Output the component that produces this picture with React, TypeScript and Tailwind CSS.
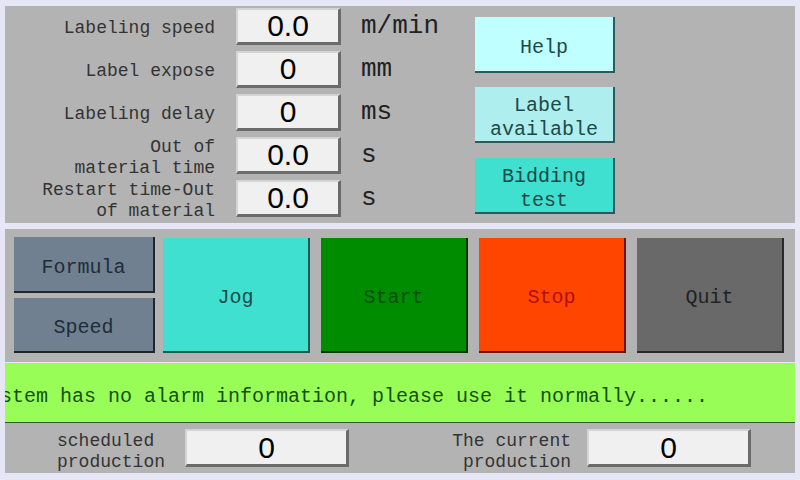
import React from "react";

const mono = "font-[family-name:Liberation_Mono,Courier_New,monospace]";
const sans = "font-[family-name:Liberation_Sans,Arial,sans-serif]";

type Param = { label: string[]; value: string; unit: string };

const params: Param[] = [
  { label: ["Labeling speed"], value: "0.0", unit: "m/min" },
  { label: ["Label expose"], value: "0", unit: "mm" },
  { label: ["Labeling delay"], value: "0", unit: "ms" },
  { label: ["Out of", "material time"], value: "0.0", unit: "s" },
  { label: ["Restart time-Out", "of material"], value: "0.0", unit: "s" },
];

// Sunken-looking numeric field used across the HMI screen
function ValueBox({ value, className }: { value: string; className: string }) {
  return (
    <div
      className={`${className} flex items-center justify-center bg-[#f0f0f0] border-t-2 border-l-2 border-t-[#d4d4d4] border-l-[#d4d4d4] border-b-[3px] border-r-[3px] border-b-[#6b6b6b] border-r-[#6b6b6b] ${sans} text-[30px] leading-none text-black`}
    >
      {value}
    </div>
  );
}

function SideButton({ lines, bg }: { lines: string[]; bg: string }) {
  return (
    <button
      className={`w-[140px] h-[56px] pt-[8px] ${bg} border-r-2 border-b-2 border-r-[#2f5a5a] border-b-[#2f5a5a] flex flex-col items-center justify-center ${mono} text-[20px] leading-[24px] text-[#1c4a4a]`}
    >
      {lines.map((l) => (
        <span key={l}>{l}</span>
      ))}
    </button>
  );
}

function BigButton({ label, className }: { label: string; className: string }) {
  return (
    <button
      className={`w-[147px] h-[115px] pt-[7px] flex items-center justify-center border-r-2 border-b-2 border-black/60 ${mono} text-[20px] ${className}`}
    >
      {label}
    </button>
  );
}

export default function App() {
  return (
    <div className="w-[800px] h-[480px] bg-[#e6e6f6] pt-[6px] px-[5px] overflow-hidden">
      {/* parameter panel */}
      <div className="h-[217px] bg-[#b3b3b3] flex">
        <div className="flex flex-col gap-[6px] pt-[2px]">
          {params.map((p) => (
            <div key={p.label.join(" ")} className="flex items-center h-[37px]">
              <div
                className={`w-[210px] pt-[4px] text-right ${mono} text-[18px] leading-[21px] text-[#333]`}
              >
                {p.label.map((l) => (
                  <div key={l} className="whitespace-pre">
                    {l}
                  </div>
                ))}
              </div>
              <ValueBox value={p.value} className="ml-[21px] w-[105px] h-[37px]" />
              <div className={`ml-[20px] w-[114px] pb-[2px] ${mono} text-[26px] leading-none text-[#222]`}>
                {p.unit}
              </div>
            </div>
          ))}
        </div>
        <div className="flex flex-col pt-[11px] gap-[14px]">
          <SideButton lines={["Help"]} bg="bg-[#c0ffff]" />
          <SideButton lines={["Label", "available"]} bg="bg-[#afeeee]" />
          <div className="pt-[1px]">
            <SideButton lines={["Bidding", "test"]} bg="bg-[#40e0d0]" />
          </div>
        </div>
      </div>

      {/* control panel */}
      <div className="mt-[6px] h-[133px] bg-[#b3b3b3] flex items-start pt-[8px] pl-[9px]">
        <div className="flex flex-col gap-[5px]">
          <button
            className={`w-[141px] h-[56px] pt-[7px] bg-[#708090] border-r-2 border-b-2 border-black/70 ${mono} text-[20px] text-[#1e2d38]`}
          >
            Formula
          </button>
          <button
            className={`w-[141px] h-[55px] pt-[7px] bg-[#708090] border-r-2 border-b-2 border-black/70 ${mono} text-[20px] text-[#1e2d38]`}
          >
            Speed
          </button>
        </div>
        <div className="flex gap-[11px] ml-[8px] mt-[1px]">
          <BigButton label="Jog" className="bg-[#40e0d0] text-[#1c4a4a] border-[#2f6a64]" />
          <BigButton label="Start" className="bg-[#008c00] text-[#005000]" />
          <BigButton label="Stop" className="bg-[#ff4500] text-[#b01010]" />
          <BigButton label="Quit" className="bg-[#696969] text-[#222]" />
        </div>
      </div>

      {/* alarm marquee */}
      <div className="mt-[1px] h-[60px] pt-[8px] bg-[#99fd57] border-b border-[#2e5a2e] flex items-center overflow-hidden">
        <div className={`-ml-[29px] whitespace-pre ${mono} text-[20px] text-[#125212]`}>
          System has no alarm information, please use it normally......
        </div>
      </div>

      {/* production counters */}
      <div className="h-[50px] bg-[#b3b3b3] flex items-center pl-[52px]">
        <div className={`w-[112px] pt-[8px] ${mono} text-[18px] leading-[21px] text-[#333]`}>
          <div>scheduled</div>
          <div>production</div>
        </div>
        <ValueBox value="0" className="ml-[16px] w-[164px] h-[38px]" />
        <div className={`ml-[102px] w-[120px] pt-[8px] text-right ${mono} text-[18px] leading-[21px] text-[#333]`}>
          <div>The current</div>
          <div>production</div>
        </div>
        <ValueBox value="0" className="ml-[16px] w-[164px] h-[38px]" />
      </div>
    </div>
  );
}
